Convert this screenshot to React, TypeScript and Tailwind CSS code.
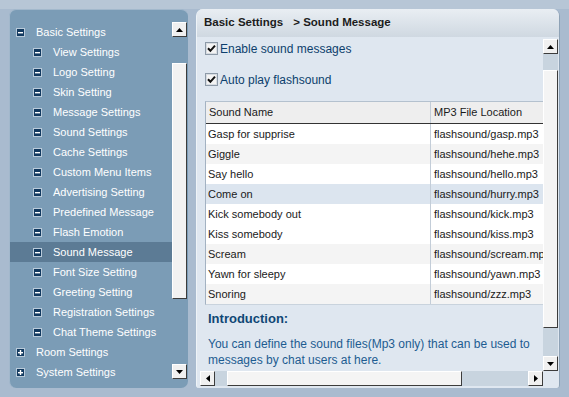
import React from "react";

const tree: { label: string; level: number; open?: boolean; active?: boolean }[] = [
  { label: "Basic Settings", level: 0, open: true },
  { label: "View Settings", level: 1 },
  { label: "Logo Setting", level: 1 },
  { label: "Skin Setting", level: 1 },
  { label: "Message Settings", level: 1 },
  { label: "Sound Settings", level: 1 },
  { label: "Cache Settings", level: 1 },
  { label: "Custom Menu Items", level: 1 },
  { label: "Advertising Setting", level: 1 },
  { label: "Predefined Message", level: 1 },
  { label: "Flash Emotion", level: 1 },
  { label: "Sound Message", level: 1, active: true },
  { label: "Font Size Setting", level: 1 },
  { label: "Greeting Setting", level: 1 },
  { label: "Registration Settings", level: 1 },
  { label: "Chat Theme Settings", level: 1 },
  { label: "Room Settings", level: 0 },
  { label: "System Settings", level: 0 },
];

const sounds = [
  ["Gasp for supprise", "flashsound/gasp.mp3"],
  ["Giggle", "flashsound/hehe.mp3"],
  ["Say hello", "flashsound/hello.mp3"],
  ["Come on", "flashsound/hurry.mp3"],
  ["Kick somebody out", "flashsound/kick.mp3"],
  ["Kiss somebody", "flashsound/kiss.mp3"],
  ["Scream", "flashsound/scream.mp3"],
  ["Yawn for sleepy", "flashsound/yawn.mp3"],
  ["Snoring", "flashsound/zzz.mp3"],
];

// row tints, picked from the screenshot
const rowBg = ["bg-white", "bg-[#f4f4f4]", "bg-white", "bg-[#dce5ef]", "bg-white", "bg-white", "bg-[#f4f4f4]", "bg-white", "bg-[#f4f4f4]"];

function TreeIcon({ open }: { open?: boolean }) {
  return (
    <svg width="9" height="9" viewBox="0 0 9 9" className="shrink-0">
      <rect x="0.5" y="0.5" width="8" height="8" fill="#123a60" stroke="#b9cad9" />
      <rect x="2" y="4" width="5" height="1.4" fill="#fff" />
      {!open && <rect x="3.8" y="2" width="1.4" height="5" fill="#fff" />}
    </svg>
  );
}

function Arrow({ dir }: { dir: "up" | "down" | "left" | "right" }) {
  const pts = {
    up: "0,4 7,4 3.5,0",
    down: "0,0 7,0 3.5,4",
    left: "4,0 4,7 0,3.5",
    right: "0,0 0,7 4,3.5",
  }[dir];
  const vert = dir === "up" || dir === "down";
  return (
    <div className="w-[15px] h-[15px] shrink-0 bg-[#f0f0f0] border border-t-white border-l-white border-r-[#3c3c3c] border-b-[#3c3c3c] flex items-center justify-center">
      <svg width={vert ? 7 : 4} height={vert ? 4 : 7}>
        <polygon points={pts} fill="#000" />
      </svg>
    </div>
  );
}

function Check({ label }: { label: string }) {
  return (
    <div className="flex items-center h-[13px]">
      <svg width="13" height="13" viewBox="0 0 13 13" className="shrink-0">
        <rect x="0.5" y="0.5" width="12" height="12" fill="#f4f4f4" stroke="#8d9aa8" />
        <rect x="1.5" y="1.5" width="10" height="10" fill="none" stroke="#d8dde2" />
        <path d="M3 6.2 L5.4 8.8 L10 3.6" fill="none" stroke="#111" strokeWidth="2" />
      </svg>
      <span className="ml-[2px] text-[12px] text-[#0d3f6d] leading-none">{label}</span>
    </div>
  );
}

export default function App() {
  return (
    <div className="w-[569px] h-[397px] overflow-hidden bg-[linear-gradient(#b7c6d6_0,#b7c6d6_9px,#a9bbcf_9px)] font-['Liberation_Sans',Arial,sans-serif] text-[11px]">
      <div className="flex h-full p-[9px] gap-[8px]">
        {/* left tree panel */}
        <div className="w-[179px] flex rounded-[7px] bg-[#7b9cb6] border-l border-t border-[#a2b8cc] overflow-hidden">
          <div className="flex-1 pt-[12px] text-white">
            {tree.map((t) => (
              <div
                key={t.label}
                className={`h-[20px] flex items-center ${t.active ? "bg-[#5c7b95]" : ""} ${t.level === 0 ? "pl-[6px]" : "pl-[23px]"}`}
              >
                <TreeIcon open={t.level === 1 || t.open} />
                <span className="ml-[11px] whitespace-nowrap">{t.label}</span>
              </div>
            ))}
          </div>
          <div className="w-[16px] flex flex-col pt-[12px] pb-[9px]">
            <Arrow dir="up" />
            <div className="flex-1">
              <div className="mt-[26px] w-[15px] h-[236px] bg-[#f2f2f2] border border-t-white border-l-white border-r-[#3c3c3c] border-b-[#3c3c3c]" />
            </div>
            <Arrow dir="down" />
          </div>
        </div>

        {/* right content panel */}
        <div className="flex-1 flex flex-col rounded-t-[7px] rounded-b-[3px] bg-[#dfe7f0] border-l border-r border-l-[#eef3f7] border-r-[#8ea2b6] overflow-hidden">
          <div className="h-[28px] shrink-0 flex items-center pl-[7px] bg-[linear-gradient(#e9eef3,#cfd8e1)] text-[11.5px] font-bold text-[#1c1c1c] whitespace-nowrap">
            Basic Settings<span className="ml-[10px]">&gt; Sound Message</span>
          </div>

          <div className="flex-1 flex min-h-0">
            <div className="flex-1 overflow-hidden pl-[8px] pt-[5px]">
              <Check label="Enable sound messages" />
              <div className="mt-[18px]">
                <Check label="Auto play flashsound" />
              </div>

              <div className="mt-[15px] w-[360px] border-l border-t border-b border-l-[#a3b2c2] border-t-[#b4c1ce] border-b-[#c9d3dd] text-[#1a1a1a]">
                <div className="h-[22px] flex bg-[#eeeeee] border-b border-[#333]">
                  <div className="w-[225px] shrink-0 pl-[3px] flex items-center border-r border-[#c3cdd8]">Sound Name</div>
                  <div className="flex-1 pl-[3px] flex items-center">MP3 File Location</div>
                </div>
                {sounds.map(([name, file], i) => (
                  <div key={name} className={`h-[20px] flex ${rowBg[i]}`}>
                    <div className="w-[225px] shrink-0 pl-[2px] flex items-center border-r border-[#c3cdd8]">{name}</div>
                    <div className="flex-1 pl-[3px] flex items-center whitespace-nowrap">{file}</div>
                  </div>
                ))}
              </div>

              <div className="mt-[6px] pl-[3px] h-[16px] flex items-center text-[13px] font-bold text-[#0f4775]">Introduction:</div>
              <div className="mt-[9px] pl-[3px] text-[12px] leading-[16px] text-[#1d5c91] whitespace-nowrap">
                <div>You can define the sound files(Mp3 only) that can be used to</div>
                <div>messages by chat users at here.</div>
              </div>
            </div>

            <div className="w-[15px] mr-[1px] flex flex-col pt-[2px] bg-[#dfe7f0]">
              <Arrow dir="up" />
              <div className="flex-1 bg-[#c8d4df] flex flex-col">
                <div className="mt-[16px] h-[258px] bg-[#f4f4f4] border border-t-white border-l-white border-r-[#3c3c3c] border-b-[#3c3c3c]" />
              </div>
              <Arrow dir="down" />
            </div>
          </div>

          <div className="h-[17px] shrink-0 flex pl-[3px]">
            <div className="w-[343px] h-[15px] flex bg-[#c8d4df]">
              <Arrow dir="left" />
              <div className="flex-1">
                <div className="ml-[12px] w-[235px] h-[15px] bg-[#f4f4f4] border border-t-white border-l-white border-r-[#3c3c3c] border-b-[#3c3c3c]" />
              </div>
              <Arrow dir="right" />
            </div>
          </div>
        </div>
      </div>
    </div>
  );
}
